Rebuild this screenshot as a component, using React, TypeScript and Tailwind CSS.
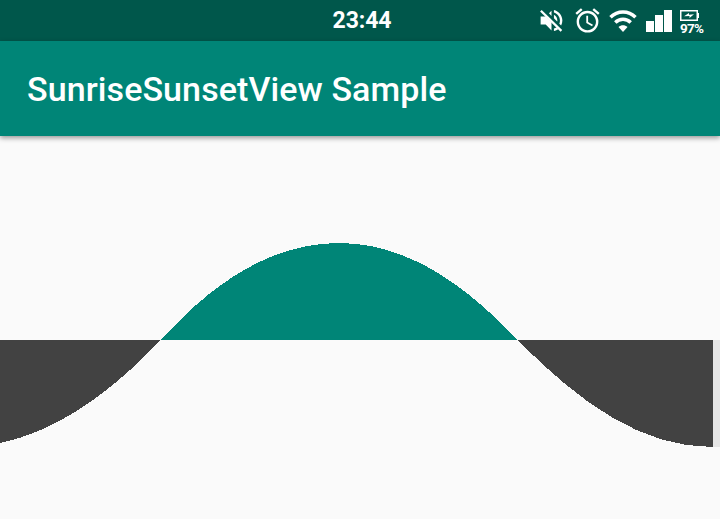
function StatusBar() {
  return (
    <header className="grid h-[41px] grid-cols-[1fr_auto_1fr] items-start bg-[#00574b] text-white">
      <span />
      <time className="ml-[4px] pt-[7px] text-[23px] leading-7 font-bold tracking-[-0.1px]">23:44</time>
      <div className="flex justify-end pt-[6px] pr-[16px]">
        <svg className="mr-[7px] h-[29px] w-[29px]" viewBox="0 0 24 24" fill="currentColor">
          <path d="M12 4L9.91 6.09 12 8.18V4zM14 3.230v2.060c2.890.86 5 3.540 5 6.710 0 .94-.2 1.820-.540 2.640l1.510 1.510C20.630 14.910 21 13.500 21 12c0-4.280-2.990-7.860-7-8.770z" />
          <path d="M14 7.200v3l2.700 2.700c.15-.3.150-.6.150-.9 0-2-1.150-4-2.850-4.800z" />
          <path d="M3 8.700v6.600h4.200l4.800 4.900v-6.900L7.400 8.700zM14 18.700v2.060c1.400-.3 2.700-.95 3.700-1.800l-1.450-1.440c-.7.520-1.450.93-2.250 1.180z" />
          <path d="M3.200 3.900L20.200 20.600" stroke="currentColor" strokeWidth="1.9" />
        </svg>
        <svg className="mr-[7px] h-[29px] w-[29px]" viewBox="0 0 24 24" fill="currentColor">
          <path d="M22 5.72l-4.6-3.86-1.29 1.53 4.6 3.86L22 5.72zM7.88 3.39L6.6 1.86 2 5.71l1.29 1.53 4.59-3.85zM12.5 8H11v6l4.75 2.85.75-1.23-4-2.37V8zM12 4c-4.97 0-9 4.03-9 9s4.02 9 9 9a9 9 0 0 0 0-18zm0 16c-3.87 0-7-3.13-7-7s3.13-7 7-7 7 3.13 7 7-3.13 7-7 7z" />
        </svg>
        <svg className="mt-[3px] mr-[9px] h-[24px] w-[28px]" viewBox="0 0 28 24" fill="none" stroke="currentColor">
          <path d="M1.500 8.200C8.500 1.300 19.500 1.300 26.500 8.200" strokeWidth="3.500" />
          <path d="M6.300 13.500C10.700 9.200 17.300 9.200 21.700 13.500" strokeWidth="3.500" />
          <path d="M9.500 18C12 15.700 16 15.700 18.500 18L14 23z" fill="currentColor" stroke="none" />
        </svg>
        <svg className="mt-[3px] mr-[8px] h-[24px] w-[26px]" viewBox="0 0 26 24" fill="currentColor">
          <path d="M0 12h8v11H0zM9 6h8v17H9zM18 1h8v22h-8z" />
        </svg>
        <div className="flex w-[24px] flex-col items-start">
          <svg className="mt-[3px] h-[13px] w-[20px]" viewBox="0 0 20 13" fill="none">
            <path d="M.75 1.75h16.500v9.500H.75z" stroke="white" strokeWidth="1.500" />
            <path d="M17.500 4H19v5h-1.500z" fill="white" />
            <path d="M4 7.200L9 4v1.700l5-.5L9.500 9V7z" fill="white" />
          </svg>
          <span className="text-[13.500px] leading-[13px] font-bold tracking-[-0.8px]">97%</span>
        </div>
      </div>
    </header>
  );
}

export default function App() {
  return (
    <div className="flex h-[519px] w-[720px] flex-col overflow-hidden bg-[#fafafa] font-[Roboto,sans-serif]">
      <StatusBar />
      <div className="z-10 flex h-[95px] shrink-0 items-center bg-[#008577] pl-[27px] shadow-[0_2px_5px_rgba(0,0,0,0.4)]">
        <h1 className="text-[34px] leading-10 font-medium tracking-[0.09px] whitespace-nowrap text-white">
          SunriseSunsetView Sample
        </h1>
      </div>
      <main className="flex-1">
        <svg className="block h-[383px] w-[720px]" viewBox="0 136 720 383" shapeRendering="crispEdges">
          <path d="M713 340h7v107h-7z" fill="#e6e6e6" />
          <path d="M0 443Q79 426.5 160.5 340H0Z" fill="#424242" />
          <path d="M161 340Q248 243 339 243Q428 243 517 340Z" fill="#008577" />
          <path d="M517.5 340C582 405 642 447 713 447V340Z" fill="#424242" />
        </svg>
      </main>
    </div>
  );
}
